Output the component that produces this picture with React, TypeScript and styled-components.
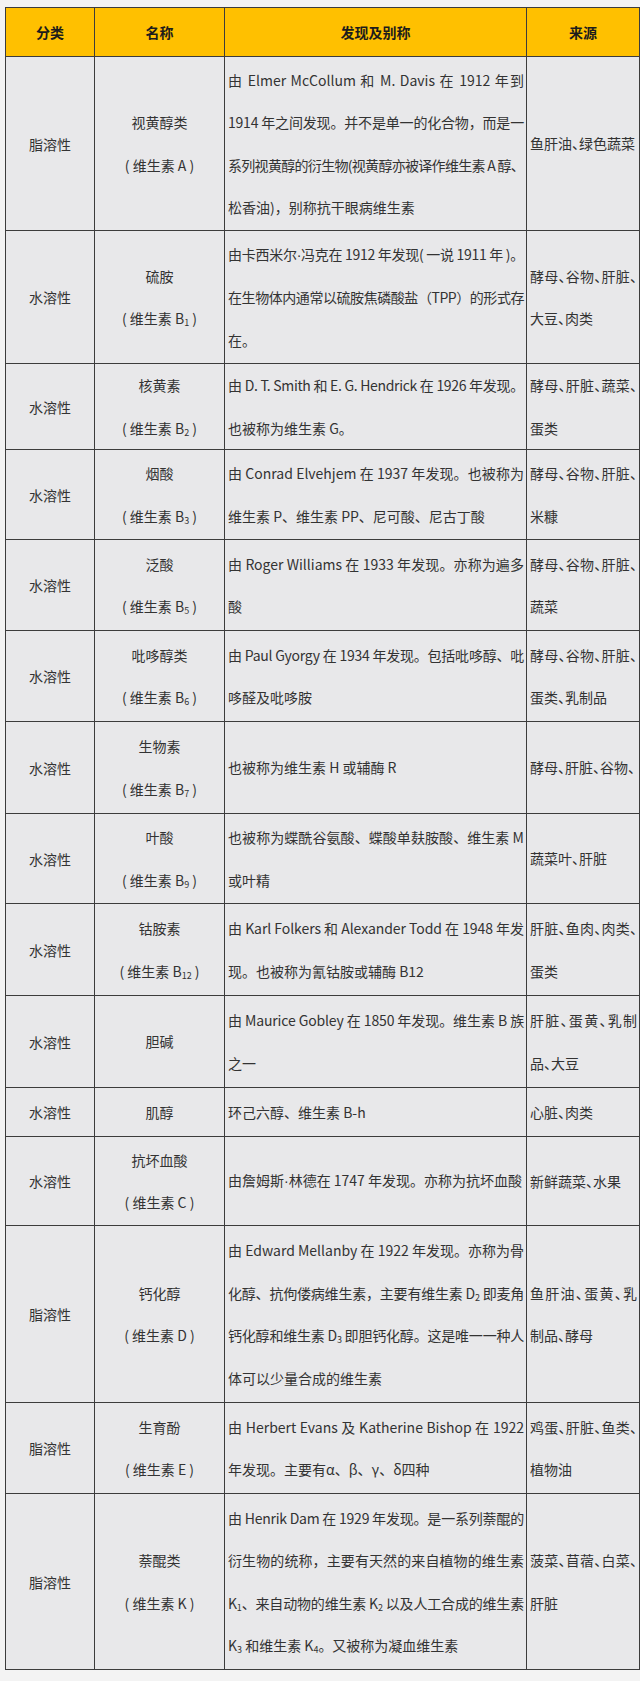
import {ReactNode, useLayoutEffect, useRef, useState} from "react";
import styled, {createGlobalStyle} from "styled-components";

const GlobalStyle = createGlobalStyle`
    html, body {
        margin: 0;
        padding: 0;
        background: #f3f3f3;
    }
    body {
        font-family: "Noto Sans CJK SC", "Noto Sans", sans-serif;
        color: #333;
    }
`

const Wrapper = styled.div`
    padding: 7px 2px 8px 5px;
`

const Table = styled.table`
    width: 634px;
    border-collapse: collapse;
    table-layout: fixed;
    font-size: 14px;
`

const HeadCell = styled.th`
    height: 48px;
    padding: 0;
    background: #ffc000;
    border: 1px solid #3c3c3c;
    color: #1c1c1c;
    font-weight: 700;
    font-size: 14px;
    text-align: center;
    vertical-align: middle;
`

const Row = styled.tr<{ $h: number }>`
    height: ${p => p.$h}px;
`

const Cell = styled.td<{ $align?: 'center' | 'left', $halt?: boolean }>`
    padding: 0 ${p => p.$align === 'left' ? '2px 0 3px' : '0'};
    background: #e8e8ea;
    border: 1px solid #3c3c3c;
    text-align: ${p => p.$align ?? 'center'};
    vertical-align: middle;
    overflow: hidden;
    font-feature-settings: ${p => p.$halt ? '"halt"' : 'normal'};
`

const Line = styled.span<{ $justify?: boolean }>`
    display: block;
    white-space: nowrap;
    line-height: 42.5px;
    ${p => p.$justify && `
        text-align: justify;
        text-align-last: justify;
    `}
`

const Sub = styled.sub`
    font-size: 9px;
    vertical-align: -2px;
    line-height: 0;
`

const Dot = styled.span`
    font-family: "Liberation Sans", sans-serif;
`

// "_{1}" -> 아래첨자, "·" -> 좁은 점
const rich = (text: string): ReactNode => {
    const parts = text.split(/_\{([^}]*)\}/)
    return parts.map((part, i) => {
        if (i % 2) return <Sub key={i}>{part}</Sub>
        const pieces = part.split('·')
        return pieces.map((p, j) => <span key={`${i}-${j}`}>{j > 0 && <Dot>·</Dot>}{p}</span>)
    })
}

// 셀보다 긴 줄은 자간을 줄여서 맞춤
const FitLine = ({text, justify}: { text: string, justify?: boolean }) => {
    const ref = useRef<HTMLSpanElement>(null)
    const [spacing, setSpacing] = useState(0)

    useLayoutEffect(() => {
        const el = ref.current
        if (!el) return
        const over = el.scrollWidth - el.clientWidth
        if (over > 0) {
            const count = (el.textContent ?? '').length
            setSpacing(-(over + 1) / count)
        }
    }, [])

    return <Line ref={ref} $justify={justify} style={spacing ? {letterSpacing: spacing} : undefined}>
        {rich(text)}
    </Line>
}

type Vitamin = {
    cat: string
    name: string[]
    desc: string[]
    src: string[]
    h: number
}

const rows: Vitamin[] = [
    {
        cat: '脂溶性', name: ['视黄醇类', '( 维生素 A )'], h: 174,
        desc: ['由 Elmer McCollum 和 M. Davis 在 1912 年到', '1914 年之间发现。并不是单一的化合物，而是一', '系列视黄醇的衍生物(视黄醇亦被译作维生素 A 醇、', '松香油)，别称抗干眼病维生素'],
        src: ['鱼肝油、绿色蔬菜'],
    },
    {
        cat: '水溶性', name: ['硫胺', '( 维生素 B_{1} )'], h: 133,
        desc: ['由卡西米尔·冯克在 1912 年发现( 一说 1911 年 )。', '在生物体内通常以硫胺焦磷酸盐（TPP）的形式存', '在。'],
        src: ['酵母、谷物、肝脏、', '大豆、肉类'],
    },
    {
        cat: '水溶性', name: ['核黄素', '( 维生素 B_{2} )'], h: 85,
        desc: ['由 D. T. Smith 和 E. G. Hendrick 在 1926 年发现。', '也被称为维生素 G。'],
        src: ['酵母、肝脏、蔬菜、', '蛋类'],
    },
    {
        cat: '水溶性', name: ['烟酸', '( 维生素 B_{3} )'], h: 90,
        desc: ['由 Conrad Elvehjem 在 1937 年发现。也被称为', '维生素 P、维生素 PP、尼可酸、尼古丁酸'],
        src: ['酵母、谷物、肝脏、', '米糠'],
    },
    {
        cat: '水溶性', name: ['泛酸', '( 维生素 B_{5} )'], h: 91,
        desc: ['由 Roger Williams 在 1933 年发现。亦称为遍多', '酸'],
        src: ['酵母、谷物、肝脏、', '蔬菜'],
    },
    {
        cat: '水溶性', name: ['吡哆醇类', '( 维生素 B_{6} )'], h: 91,
        desc: ['由 Paul Gyorgy 在 1934 年发现。包括吡哆醇、吡', '哆醛及吡哆胺'],
        src: ['酵母、谷物、肝脏、', '蛋类、乳制品'],
    },
    {
        cat: '水溶性', name: ['生物素', '( 维生素 B_{7} )'], h: 92,
        desc: ['也被称为维生素 H 或辅酶 R'],
        src: ['酵母、肝脏、谷物、'],
    },
    {
        cat: '水溶性', name: ['叶酸', '( 维生素 B_{9} )'], h: 90,
        desc: ['也被称为蝶酰谷氨酸、蝶酸单麸胺酸、维生素 M', '或叶精'],
        src: ['蔬菜叶、肝脏'],
    },
    {
        cat: '水溶性', name: ['钴胺素', '( 维生素 B_{12} )'], h: 92,
        desc: ['由 Karl Folkers 和 Alexander Todd 在 1948 年发', '现。也被称为氰钴胺或辅酶 B12'],
        src: ['肝脏、鱼肉、肉类、', '蛋类'],
    },
    {
        cat: '水溶性', name: ['胆碱'], h: 92,
        desc: ['由 Maurice Gobley 在 1850 年发现。维生素 B 族', '之一'],
        src: ['肝脏、蛋黄、乳制', '品、大豆'],
    },
    {
        cat: '水溶性', name: ['肌醇'], h: 49,
        desc: ['环己六醇、维生素 B-h'],
        src: ['心脏、肉类'],
    },
    {
        cat: '水溶性', name: ['抗坏血酸', '( 维生素 C )'], h: 89,
        desc: ['由詹姆斯·林德在 1747 年发现。亦称为抗坏血酸'],
        src: ['新鲜蔬菜、水果'],
    },
    {
        cat: '脂溶性', name: ['钙化醇', '( 维生素 D )'], h: 177,
        desc: ['由 Edward Mellanby 在 1922 年发现。亦称为骨', '化醇、抗佝偻病维生素，主要有维生素 D_{2} 即麦角', '钙化醇和维生素 D_{3} 即胆钙化醇。这是唯一一种人', '体可以少量合成的维生素'],
        src: ['鱼肝油、蛋黄、乳', '制品、酵母'],
    },
    {
        cat: '脂溶性', name: ['生育酚', '( 维生素 E )'], h: 91,
        desc: ['由 Herbert Evans 及 Katherine Bishop 在 1922', '年发现。主要有α、β、γ、δ四种'],
        src: ['鸡蛋、肝脏、鱼类、', '植物油'],
    },
    {
        cat: '脂溶性', name: ['萘醌类', '( 维生素 K )'], h: 176,
        desc: ['由 Henrik Dam 在 1929 年发现。是一系列萘醌的', '衍生物的统称，主要有天然的来自植物的维生素', 'K_{1}、来自动物的维生素 K_{2} 以及人工合成的维生素', 'K_{3} 和维生素 K_{4}。又被称为凝血维生素'],
        src: ['菠菜、苜蓿、白菜、', '肝脏'],
    },
]

const centered = (items: string[]) => items.map((t, i) => <Line key={i}>{rich(t)}</Line>)

// 워드 양쪽 정렬처럼 마지막 줄 빼고 채움
const justified = (items: string[]) => items.map((t, i) =>
    <FitLine key={i} text={t} justify={i < items.length - 1}/>)

const App = () => {
    return (<>
        <GlobalStyle/>
        <Wrapper>
            <Table>
                <colgroup>
                    <col style={{width: 89}}/>
                    <col style={{width: 130}}/>
                    <col style={{width: 302}}/>
                    <col style={{width: 113}}/>
                </colgroup>
                <thead>
                <tr>
                    <HeadCell>分类</HeadCell>
                    <HeadCell>名称</HeadCell>
                    <HeadCell>发现及别称</HeadCell>
                    <HeadCell>来源</HeadCell>
                </tr>
                </thead>
                <tbody>
                {rows.map((row, i) => (
                    <Row key={i} $h={row.h}>
                        <Cell>{row.cat}</Cell>
                        <Cell>{centered(row.name)}</Cell>
                        <Cell $align={'left'}>{justified(row.desc)}</Cell>
                        <Cell $align={'left'} $halt>{justified(row.src)}</Cell>
                    </Row>
                ))}
                </tbody>
            </Table>
        </Wrapper>
    </>)
}

export default App
